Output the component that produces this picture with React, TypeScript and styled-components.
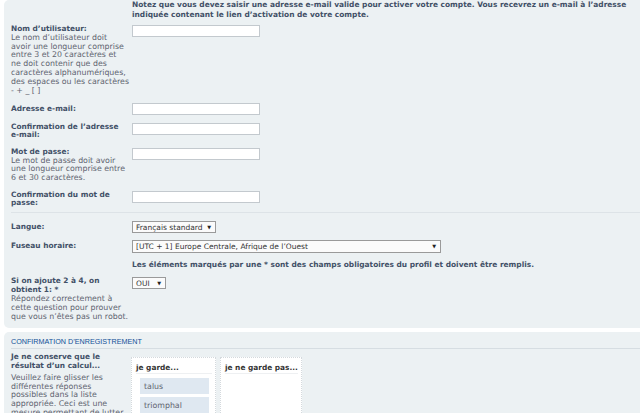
import React from "react";
import styled, { createGlobalStyle } from "styled-components";

const Global = createGlobalStyle`
  html, body { margin: 0; padding: 0; background: #ffffff; overflow: hidden; }
  body { font-family: "DejaVu Sans", Verdana, sans-serif; }
`;

const Page = styled.div`
  width: 640px;
  height: 413px;
  overflow: hidden;
  display: flex;
  flex-direction: column;
  gap: 4px;
`;

const Panel = styled.div<{ $top?: number }>`
  margin-left: 4px;
  margin-right: -20px;
  background: #ecf1f3;
  border-radius: 5px;
  padding: ${(p) => p.$top ?? 0}px 0 6px 7px;
  color: #536482;
  flex-shrink: 0;
`;

const Notice = styled.p`
  margin: 0 0 0 121px;
  font-size: 7.45px;
  font-weight: bold;
  line-height: 9.6px;
  color: #425067;
  white-space: nowrap;
`;

const Fields = styled.div<{ $mt: number; $gap: number }>`
  display: flex;
  flex-direction: column;
  gap: ${(p) => p.$gap}px;
  margin-top: ${(p) => p.$mt}px;
`;

const Row = styled.div<{ $center?: boolean }>`
  display: flex;
  align-items: ${(p) => (p.$center ? "center" : "flex-start")};
`;

const Label = styled.div`
  width: 121px;
  flex-shrink: 0;
  font-size: 7.4px;
  line-height: 8.9px;
  white-space: nowrap;
`;

const Title = styled.div`
  font-weight: bold;
  color: #425067;
`;

const Explain = styled.div<{ $gap?: number }>`
  color: #5f6470;
  font-size: 7.85px;
  margin-top: ${(p) => p.$gap ?? 0}px;
`;

const Field = styled.div`
  flex: 1;
  display: flex;
`;

const TextInput = styled.div`
  width: 128px;
  height: 12px;
  box-sizing: border-box;
  background: #ffffff;
  border: 1px solid #c3c9ce;
`;

const Select = styled.div<{ $w: number; $h?: number }>`
  width: ${(p) => p.$w}px;
  height: ${(p) => p.$h ?? 12}px;
  box-sizing: border-box;
  background: #fbfbfb;
  border: 1px solid #9a9a9a;
  display: flex;
  align-items: center;
  justify-content: space-between;
  padding: 0 4px 0 3px;
  font-size: 7.5px;
  color: #333333;
  white-space: nowrap;
`;

const Arrow = styled.span`
  font-size: 5px;
  color: #222;
`;

const Separator = styled.hr`
  border: 0;
  border-top: 1px solid #dde3e7;
  margin: 4px 0 8px 0;
  height: 0;
`;

const Note = styled.div`
  margin: 1.5px 0 1px 121px;
  font-size: 7.45px;
  font-weight: bold;
  line-height: 8.9px;
  color: #425067;
  white-space: nowrap;
`;

const Heading = styled.h3`
  margin: 0;
  font-family: "Liberation Sans", Arial, sans-serif;
  font-size: 7.2px;
  font-weight: normal;
  text-transform: uppercase;
  color: #115098;
  line-height: 9px;
  padding: 0 0 1.5px 0;
  border-bottom: 1px solid #d6dde2;
`;

const SortRow = styled.div`
  display: flex;
  align-items: flex-start;
  margin-top: 4.5px;
`;

const Boxes = styled.div`
  display: flex;
  gap: 4px;
  margin-top: 4px;
  margin-left: -1px;
`;

const Box = styled.div<{ $w: number }>`
  width: ${(p) => p.$w}px;
  height: 80px;
  box-sizing: border-box;
  background: #ffffff;
  border: 1px dotted #d4d9dd;
  padding: 5px 3px 0 4px;
`;

const BoxTitle = styled.div`
  font-size: 7.4px;
  font-weight: bold;
  color: #333333;
  line-height: 9px;
  padding-bottom: 1px;
  border-bottom: 1px solid #eef0f2;
  margin-bottom: 4px;
`;

const Item = styled.div`
  margin: 0 3px 3px 4px;
  height: 16px;
  background: #dfe8f1;
  font-size: 7.85px;
  color: #5f6470;
  display: flex;
  align-items: center;
  padding-left: 4px;
`;

const Req = "*";

export default function App() {
  return (
    <Page>
      <Global />
      <Panel $top={0}>
        <Notice>
          Notez que vous devez saisir une adresse e-mail valide pour activer votre compte. Vous recevrez un e-mail à l’adresse
          <br />
          indiquée contenant le lien d’activation de votre compte.
        </Notice>
        <Fields $mt={5.5} $gap={7.3}>
          <Row>
            <Label>
              <Title>Nom d’utilisateur:</Title>
              <Explain>
                Le nom d’utilisateur doit
                <br />
                avoir une longueur comprise
                <br />
                entre 3 et 20 caractères et
                <br />
                ne doit contenir que des
                <br />
                caractères alphanumériques,
                <br />
                des espaces ou les caractères
                <br />- + _ [ ]
              </Explain>
            </Label>
            <Field>
              <TextInput />
            </Field>
          </Row>
          <Row $center>
            <Label>
              <Title>Adresse e-mail:</Title>
            </Label>
            <Field>
              <TextInput />
            </Field>
          </Row>
          <Row>
            <Label>
              <Title>
                Confirmation de l’adresse
                <br />
                e-mail:
              </Title>
            </Label>
            <Field>
              <TextInput />
            </Field>
          </Row>
          <Row>
            <Label>
              <Title>Mot de passe:</Title>
              <Explain>
                Le mot de passe doit avoir
                <br />
                une longueur comprise entre
                <br />6 et 30 caractères.
              </Explain>
            </Label>
            <Field>
              <TextInput />
            </Field>
          </Row>
          <Row>
            <Label>
              <Title>
                Confirmation du mot de
                <br />
                passe:
              </Title>
            </Label>
            <Field>
              <TextInput />
            </Field>
          </Row>
        </Fields>
        <Separator />
        <Fields $mt={0} $gap={6.5}>
          <Row $center>
            <Label>
              <Title>Langue:</Title>
            </Label>
            <Field>
              <Select $w={84}>
                Français standard <Arrow>▼</Arrow>
              </Select>
            </Field>
          </Row>
          <Row $center>
            <Label>
              <Title>Fuseau horaire:</Title>
            </Label>
            <Field>
              <Select $w={309} $h={13}>
                [UTC + 1] Europe Centrale, Afrique de l’Ouest <Arrow>▼</Arrow>
              </Select>
            </Field>
          </Row>
          <Note>Les éléments marqués par une {Req} sont des champs obligatoires du profil et doivent être remplis.</Note>
          <Row>
            <Label>
              <Title>
                Si on ajoute 2 à 4, on
                <br />
                obtient 1: {Req}
              </Title>
              <Explain>
                Répondez correctement à
                <br />
                cette question pour prouver
                <br />
                que vous n’êtes pas un robot.
              </Explain>
            </Label>
            <Field>
              <Select $w={34}>
                OUI <Arrow>▼</Arrow>
              </Select>
            </Field>
          </Row>
        </Fields>
      </Panel>
      <Panel $top={5.5}>
        <Heading>Confirmation d’enregistrement</Heading>
        <SortRow>
          <Label>
            <Title>
              Je ne conserve que le
              <br />
              résultat d’un calcul...
            </Title>
            <Explain $gap={2.5}>
              Veuillez faire glisser les
              <br />
              différentes réponses
              <br />
              possibles dans la liste
              <br />
              appropriée. Ceci est une
              <br />
              mesure permettant de lutter
              <br />
              contre les robots.
            </Explain>
          </Label>
          <Boxes>
            <Box $w={85}>
              <BoxTitle>je garde...</BoxTitle>
              <Item>talus</Item>
              <Item>triomphal</Item>
            </Box>
            <Box $w={82}>
              <BoxTitle>je ne garde pas...</BoxTitle>
            </Box>
          </Boxes>
        </SortRow>
      </Panel>
    </Page>
  );
}
